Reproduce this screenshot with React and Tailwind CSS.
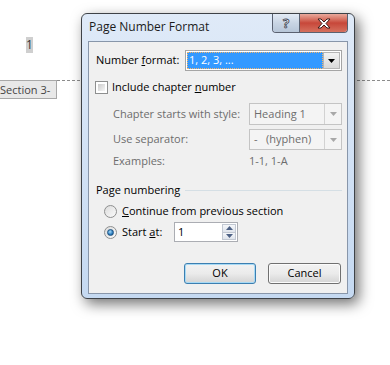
const font = { fontFamily: '"Open Sans", "Noto Sans", sans-serif' };

function Radio({ checked }) {
  return (
    <div className="flex h-[13px] w-[13px] items-center justify-center rounded-full border border-[#8e8f8f] bg-gradient-to-br from-[#dcdcdc] to-[#fbfbfb]">
      {checked && (
        <div className="h-[7px] w-[7px] rounded-full border border-[#1c5180] bg-[radial-gradient(circle_at_40%_35%,#a8dcfa,#2a7bbd_60%,#16507f)]" />
      )}
    </div>
  );
}

function Arrow({ color }) {
  return (
    <svg width="7" height="4" viewBox="0 0 7 4">
      <path d="M0 0h7L3.5 4z" fill={color} />
    </svg>
  );
}

function DisabledSelect({ value }) {
  return (
    <div className="flex h-full w-[93px] border border-[#c4c4c4] bg-[#f4f4f4]">
      <div className="flex flex-1 items-center pl-[4px] text-[#6d6d6d]">{value}</div>
      <div className="flex w-[17px] items-center justify-center border-l border-[#d2d2d2]">
        <Arrow color="#a8a8a8" />
      </div>
    </div>
  );
}

export default function App() {
  return (
    <div className="relative h-[365px] w-[390px] overflow-hidden bg-white text-[11px] text-black" style={font}>
      {/* document behind the dialog */}
      <div className="pl-[26px] pt-[37px]">
        <span className="inline-block h-[16px] w-[7px] bg-[#cfcfcf] text-center text-[12px] leading-[16px] text-[#333]">1</span>
      </div>
      <div className="mt-[26px] flex items-start">
        <div className="flex h-[19px] w-[57px] items-center overflow-hidden whitespace-nowrap border-y border-r border-[#a8a8a8] bg-[#e8e8e8] text-[11px] leading-none text-[#444]">
          Section 3-
        </div>
        <div className="flex-1 border-t border-dashed border-[#8c8c8c]" />
      </div>

      {/* dialog window */}
      <div className="absolute left-[81px] top-[13px] flex h-[286px] w-[274px] flex-col rounded-[6px] border border-[#3e4247] bg-gradient-to-b from-[#dfeaf8] to-[#c5d9f1] px-[6px] pb-[4px] shadow-[4px_5px_14px_rgba(0,0,0,0.55)]">
        {/* title bar */}
        <div className="flex h-[27px] items-start">
          <div className="flex-1 pl-[1px] pt-[5px] text-[12px] leading-[16px] text-[#1b1b1b]">Page Number Format</div>
          <div className="flex h-[19px] overflow-hidden rounded-b-[4px] border border-t-0 border-[#5a6170]">
            <div className="flex w-[27px] items-center justify-center border-r border-[#5a6170] bg-gradient-to-b from-[#e3ebf5] via-[#c9d5e4] to-[#b7c6d8]">
              <span className="text-[13px] font-bold leading-none text-white [-webkit-text-stroke:0.8px_#3b4352]">?</span>
            </div>
            <div className="flex w-[47px] items-center justify-center bg-gradient-to-b from-[#e8a99c] via-[#c7473a] to-[#d5705e]">
              <svg width="14" height="11" viewBox="0 0 14 11">
                <path d="M1 1h3l3 3 3-3h3L9 5.5l4 4.5h-3L7 7 4 10H1l4-4.5z" fill="#fff" stroke="#3a1d1a" strokeWidth="1" strokeLinejoin="round" />
              </svg>
            </div>
          </div>
        </div>

        {/* client area */}
        <div className="flex flex-1 flex-col border border-[#8896aa] bg-[#f0f0f0] pl-[7px] pr-[5px]">
          {/* number format */}
          <div className="mt-[8px] flex h-[21px] items-center">
            <div className="w-[89px]">
              Number <span className="underline">f</span>ormat:
            </div>
            <div className="flex h-full flex-1 border border-[#a5a5a5] bg-white p-[1px]">
              <div className="flex flex-1 items-center border border-dotted border-[#f5b46a] bg-[#3399ff] pl-[1px] text-white">1, 2, 3, ...</div>
              <div className="flex w-[17px] items-center justify-center border border-[#b5b5b5] bg-gradient-to-b from-[#f3f3f3] to-[#d9d9d9]">
                <Arrow color="#000" />
              </div>
            </div>
          </div>

          {/* include chapter number */}
          <div className="ml-[-1px] mt-[10px] flex h-[13px] items-center gap-[4px]">
            <div className="h-[13px] w-[13px] border border-[#8e8f8f] bg-white p-[2px]">
              <div className="h-full w-full bg-gradient-to-br from-[#cbcbcb] to-[#f6f6f6]" />
            </div>
            <div>
              Include chapter <span className="underline">n</span>umber
            </div>
          </div>

          <div className="ml-[17px] mt-[9px] flex h-[22px] items-center text-[#6d6d6d]">
            <div className="w-[136px]">Chapter starts with style:</div>
            <DisabledSelect value="Heading 1" />
          </div>
          <div className="ml-[17px] mt-[4px] flex h-[21px] items-center text-[#6d6d6d]">
            <div className="w-[136px]">Use separator:</div>
            <DisabledSelect value={'-\u00a0\u00a0\u00a0(hyphen)'} />
          </div>
          <div className="ml-[17px] mt-[4px] flex h-[14px] items-center text-[#6d6d6d]">
            <div className="w-[136px]">Examples:</div>
            <div>1-1, 1-A</div>
          </div>

          {/* page numbering group */}
          <div className="mt-[14px] flex h-[16px] items-center">
            <div>Page numbering</div>
            <div className="ml-[5px] h-px flex-1 bg-[#d5dfe5]" />
          </div>
          <div className="ml-[8px] mt-[5px] flex h-[16px] items-center gap-[5px]">
            <Radio />
            <div>
              <span className="underline">C</span>ontinue from previous section
            </div>
          </div>
          <div className="ml-[8px] mt-[3px] flex h-[20px] items-center">
            <Radio checked />
            <div className="ml-[5px] w-[52px]">
              Start <span className="underline">a</span>t:
            </div>
            <div className="flex h-[20px] w-[64px] border border-[#abadb3] bg-white">
              <div className="flex flex-1 items-center pl-[3px]">1</div>
              <div className="my-[1px] mr-[1px] flex w-[14px] flex-col">
                <div className="flex flex-1 items-center justify-center border border-[#c2c8d2] bg-gradient-to-b from-[#f5f7fa] to-[#dfe4ec]">
                  <svg width="7" height="4" viewBox="0 0 7 4"><path d="M0 4h7L3.5 0z" fill="#4d6185" /></svg>
                </div>
                <div className="flex flex-1 items-center justify-center border border-t-0 border-[#c2c8d2] bg-gradient-to-b from-[#f5f7fa] to-[#dfe4ec]">
                  <Arrow color="#4d6185" />
                </div>
              </div>
            </div>
          </div>

          {/* buttons */}
          <div className="mt-[21px] flex h-[21px] justify-end gap-[12px] pr-[1px]">
            <div className="flex w-[72px] items-center justify-center rounded-[3px] border border-[#3c7fb1] bg-gradient-to-b from-[#f2f2f2] via-[#ebebeb] to-[#d4d4d4] shadow-[inset_0_0_0_1px_#a8daf5]">OK</div>
            <div className="flex w-[73px] items-center justify-center rounded-[3px] border border-[#707070] bg-gradient-to-b from-[#f2f2f2] via-[#ebebeb] to-[#d4d4d4] shadow-[inset_0_0_0_1px_#fbfbfb]">Cancel</div>
          </div>
        </div>
      </div>
    </div>
  );
}
